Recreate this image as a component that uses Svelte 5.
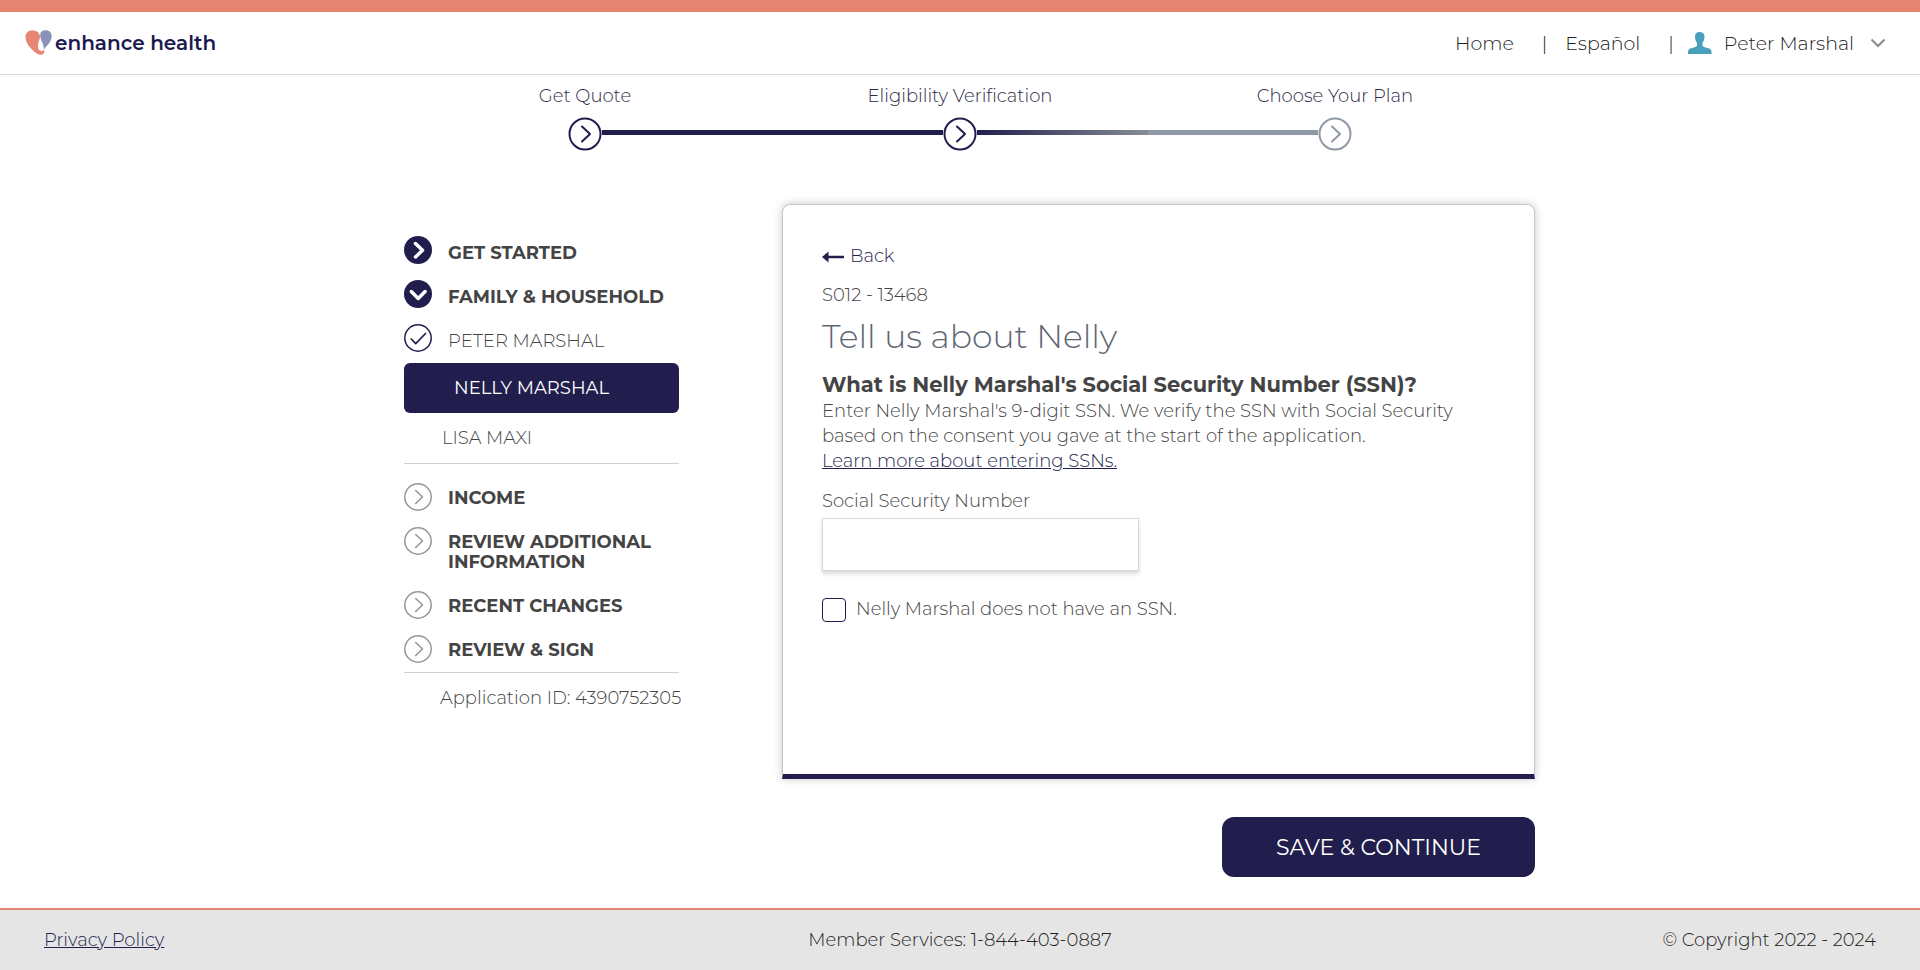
<script>
  const steps = [
    { label: 'Get Quote', state: 'done' },
    { label: 'Eligibility Verification', state: 'current' },
    { label: 'Choose Your Plan', state: 'next' }
  ];

  const upcoming = ['INCOME', 'REVIEW ADDITIONAL INFORMATION', 'RECENT CHANGES', 'REVIEW & SIGN'];

  let ssn = $state('');
  let noSsn = $state(false);
</script>

<div class="page">
  <header class="topbar">
    <a class="brand" href="#home">
      <svg width="27" height="26" viewBox="0 0 27 26" aria-hidden="true">
        <path fill="#8b92b8" d="M20.500.3c-3.500 0-5.300 2-5.300 4.700 0 3 .8 5 2.300 8 1 2.200 1.300 4 1.200 6.600C22 15.500 26.600 11.500 26.700 6.500 26.700 2.500 24.500.3 20.500.3z" />
        <path fill="#e78672" d="M8 .5C3 .3.3 3 .5 7.500c.2 4.600 3 8.500 6.500 12 3.500 3.400 6.500 5.500 9.500 5.300 2.200-.2 3.300-2 2.800-5-1 1-2 1.400-3 1.200-2.500-.2-3.300-2-3.300-5.500 0-3.300 1.500-5.500 2.100-8.500C14.800 3 12 .6 8 .5z" />
      </svg>
      <span>enhance health</span>
    </a>
    <nav class="links" aria-label="Account">
      <a href="#home">Home</a>
      <span class="bar">|</span>
      <a href="#espanol">Español</a>
      <span class="bar">|</span>
      <button class="user" type="button">
        <svg width="24" height="22" viewBox="0 0 24 22" aria-hidden="true">
          <path fill="#4a9fba" d="M11.500 0C8.600 0 7 1.700 7 4.500c0 2.600.6 4.700 2 6.200v3C8.500 15 5.500 15.300 3 16.300 1 17 0 18.200 0 20v2h23.500v-2c0-1.800-1-3-3-3.700-2.500-1-5.500-1.300-6-2.600v-3c1.400-1.500 2-3.600 2-6.200C16.500 1.700 14.500 0 11.500 0z" />
        </svg>
        <span>Peter Marshal</span>
        <svg class="caret" width="16" height="10" viewBox="0 0 16 10" aria-hidden="true">
          <path d="M1.500 1.500L8 8l6.500-6.500" fill="none" stroke="#8a8a8a" stroke-width="2" />
        </svg>
      </button>
    </nav>
  </header>

  <ol class="stepper">
    {#each steps as step}
      <li class={step.state}>
        <span class="step-label">{step.label}</span>
        <span class="track">
          <i class="line before"></i>
          <svg width="34" height="34" viewBox="0 0 34 34" aria-hidden="true">
            <circle cx="17" cy="17" r="15.500" fill="#fff" stroke="currentColor" stroke-width="2" />
            <path d="M14 9.500l8 7.500-8 7.500" fill="none" stroke="currentColor" stroke-width="2" stroke-linecap="round" stroke-linejoin="round" />
          </svg>
          <i class="line after"></i>
        </span>
      </li>
    {/each}
  </ol>

  <main class="content">
    <aside class="sidebar">
      <ul class="group">
        <li class="row">
          <svg width="28" height="28" viewBox="0 0 28 28" aria-hidden="true">
            <circle cx="14" cy="14" r="14" fill="#211e4d" />
            <path d="M11.500 7.500l7 6.700-7 6.700" fill="none" stroke="#fff" stroke-width="3.500" stroke-linecap="round" stroke-linejoin="round" />
          </svg>
          <a class="strong" href="#start">GET STARTED</a>
        </li>
        <li class="row">
          <svg width="28" height="28" viewBox="0 0 28 28" aria-hidden="true">
            <circle cx="14" cy="14" r="14" fill="#211e4d" />
            <path d="M7.300 11.500l6.900 7 6.900-7" fill="none" stroke="#fff" stroke-width="3.500" stroke-linecap="round" stroke-linejoin="round" />
          </svg>
          <a class="strong" href="#family">FAMILY &amp; HOUSEHOLD</a>
        </li>
        <li class="row">
          <svg width="28" height="28" viewBox="0 0 28 28" aria-hidden="true">
            <circle cx="14" cy="14" r="13.200" fill="none" stroke="#211e4d" stroke-width="1.500" />
            <path d="M7.300 15l4.400 4.700L21.500 9.500" fill="none" stroke="#211e4d" stroke-width="1.700" stroke-linecap="round" stroke-linejoin="round" />
          </svg>
          <a href="#peter">PETER MARSHAL</a>
        </li>
      </ul>
      <a class="active" href="#nelly" aria-current="page">NELLY MARSHAL</a>
      <a class="member" href="#lisa">LISA MAXI</a>
      <ul class="group later">
        {#each upcoming as item}
          <li class="row">
            <svg width="28" height="28" viewBox="0 0 28 28" aria-hidden="true">
              <circle cx="14" cy="14" r="13.200" fill="none" stroke="#979797" stroke-width="1.500" />
              <path d="M11.700 7.500l6.800 6.500-6.800 6.500" fill="none" stroke="#979797" stroke-width="1.600" stroke-linecap="round" stroke-linejoin="round" />
            </svg>
            <a class="strong" href="#section">{item}</a>
          </li>
        {/each}
      </ul>
      <p class="app-id">Application ID: 4390752305</p>
    </aside>

    <form class="form" onsubmit={(e) => e.preventDefault()}>
      <section class="card">
        <button class="back" type="button">
          <svg width="22" height="12" viewBox="0 0 22 12" aria-hidden="true">
            <path fill="#211e4d" d="M0 6L6.500.5v4.200H22v2.600H6.500v4.200z" />
          </svg>
          <span>Back</span>
        </button>
        <p class="code">S012 - 13468</p>
        <h1>Tell us about Nelly</h1>
        <h2>What is Nelly Marshal's Social Security Number (SSN)?</h2>
        <p>Enter Nelly Marshal's 9-digit SSN. We verify the SSN with Social Security based on the consent you gave at the start of the application.</p>
        <a class="learn" href="#learn">Learn more about entering SSNs.</a>
        <label class="ssn-label" for="ssn">Social Security Number</label>
        <input id="ssn" class="ssn" type="text" bind:value={ssn} />
        <div class="check">
          <input id="no-ssn" type="checkbox" bind:checked={noSsn} />
          <label for="no-ssn">Nelly Marshal does not have an SSN.</label>
        </div>
      </section>
      <button class="save" type="submit">SAVE &amp; CONTINUE</button>
    </form>
  </main>

  <footer class="footer">
    <a href="#privacy">Privacy Policy</a>
    <span>Member Services: 1-844-403-0887</span>
    <span class="right">© Copyright 2022 - 2024</span>
  </footer>
</div>

<style>
  :global(body) {
    margin: 0;
    background: #fff;
  }
  .page,
  .page * {
    box-sizing: border-box;
  }
  .page {
    min-height: 100vh;
    display: flex;
    flex-direction: column;
    font-family: Montserrat, Inter, 'Open Sans', sans-serif;
    font-size: 18px;
    font-weight: 300;
    line-height: 25px;
    color: #444;
  }
  a {
    color: inherit;
    text-decoration: none;
  }
  button {
    font: inherit;
    color: inherit;
    background: none;
    border: 0;
    padding: 0;
    cursor: pointer;
  }
  ul,
  ol {
    list-style: none;
    margin: 0;
    padding: 0;
  }
  p,
  h1,
  h2 {
    margin: 0;
  }
  svg {
    display: block;
    flex: none;
  }

  .topbar {
    display: flex;
    align-items: center;
    justify-content: space-between;
    height: 75px;
    padding: 0 34px 0 25px;
    border-top: 12px solid #e58571;
    border-bottom: 1px solid #d9d9d9;
  }
  .brand {
    display: flex;
    align-items: center;
    gap: 3px;
    font-size: 20px;
    font-weight: 600;
    color: #1c1950;
  }
  .links {
    display: flex;
    align-items: center;
    font-size: 19px;
    color: #222;
  }
  .bar {
    margin: 0 18px 0 28px;
  }
  .bar + .user {
    margin-left: -4px;
  }
  .user {
    display: flex;
    align-items: center;
    gap: 12px;
  }
  .caret {
    margin-left: 4px;
  }

  .stepper {
    width: 100%;
    max-width: 1125px;
    margin: 0 auto;
    padding-top: 9px;
    display: grid;
    grid-template-columns: repeat(3, 1fr);
    text-align: center;
    color: #211e4d;
  }
  .step-label {
    display: block;
    margin-bottom: 8px;
    color: #2a2a44;
  }
  .track {
    display: flex;
    align-items: center;
  }
  .line {
    flex: 1;
    height: 5px;
    margin-bottom: 3px;
    background: #211e4d;
  }
  .done .before,
  .next .after {
    visibility: hidden;
  }
  .current .after {
    background: linear-gradient(90deg, #211e4d, #868d96);
  }
  .next .track {
    color: #8f99a6;
  }
  .next .line {
    background: #8f99a6;
  }

  .content {
    width: 100%;
    max-width: 1150px;
    margin: 0 auto;
    padding: 53px 0 31px 19px;
    display: flex;
    gap: 103px;
  }
  .sidebar {
    flex: 0 0 275px;
    min-width: 0;
    padding-top: 32px;
  }
  .row {
    display: flex;
    gap: 16px;
    margin-bottom: 16px;
    line-height: 20px;
  }
  .row a {
    padding-top: 7px;
  }
  .row .strong {
    font-weight: 700;
  }
  .group .row:last-child {
    margin-bottom: 11px;
  }
  .active {
    display: block;
    padding: 12px 50px;
    line-height: 26px;
    border-radius: 6px;
    background: #211e4d;
    color: #fff;
    font-weight: 400;
  }
  .member {
    display: block;
    padding: 13px 38px 12px;
  }
  .later {
    padding-top: 19px;
    border-top: 1px solid #cfcfcf;
    border-bottom: 1px solid #cfcfcf;
  }
  .later .row a {
    padding: 5px 0 3px;
  }
  .group.later .row:last-child {
    margin-bottom: 9px;
  }
  .app-id {
    padding: 13px 0 0 36px;
    white-space: nowrap;
  }

  .form {
    flex: 1;
    display: flex;
    flex-direction: column;
  }
  .card {
    min-height: 575px;
    padding: 39px 39px 40px;
    border: 1px solid #c8c8c8;
    border-bottom: 5px solid #211e4d;
    border-radius: 8px 8px 0 0;
    box-shadow: 0 0 8px rgba(0, 0, 0, 0.22);
  }
  .back {
    display: flex;
    align-items: center;
    gap: 6px;
    color: #211e4d;
  }
  .code {
    margin-top: 14px;
  }
  h1 {
    margin-top: 8px;
    font-size: 33px;
    line-height: 40px;
    font-weight: 300;
    color: #5d6673;
  }
  h2 {
    margin: 16px 0 1px;
    font-size: 21px;
    line-height: 26px;
    font-weight: 700;
  }
  .learn {
    color: #211e4d;
    text-decoration: underline;
  }
  .ssn-label {
    display: block;
    margin-top: 15px;
  }
  .ssn {
    display: block;
    width: 317px;
    height: 53px;
    margin-top: 4px;
    padding: 0 12px;
    border: 1px solid #d5d8d8;
    font: inherit;
    box-shadow: 0 3px 4px rgba(0, 0, 0, 0.14);
  }
  .check {
    display: flex;
    align-items: center;
    gap: 10px;
    margin-top: 26px;
  }
  .check input {
    appearance: none;
    width: 24px;
    height: 24px;
    margin: 0;
    border: 1px solid #211e4d;
    border-radius: 4px;
    background: #fff;
  }
  .check input:checked {
    background: #211e4d;
  }
  .save {
    align-self: flex-end;
    width: 313px;
    height: 60px;
    margin-top: 38px;
    border-radius: 12px;
    background: #211e4d;
    color: #fff;
    font-size: 22px;
    font-weight: 400;
  }

  .footer {
    display: grid;
    grid-template-columns: 1fr auto 1fr;
    align-items: center;
    height: 62px;
    margin-top: auto;
    padding: 0 44px;
    border-top: 2px solid #e58571;
    background: #e5e5e5;
    color: #222;
  }
  .footer a {
    justify-self: start;
    color: #211e4d;
    text-decoration: underline;
  }
  .right {
    justify-self: end;
  }
</style>
